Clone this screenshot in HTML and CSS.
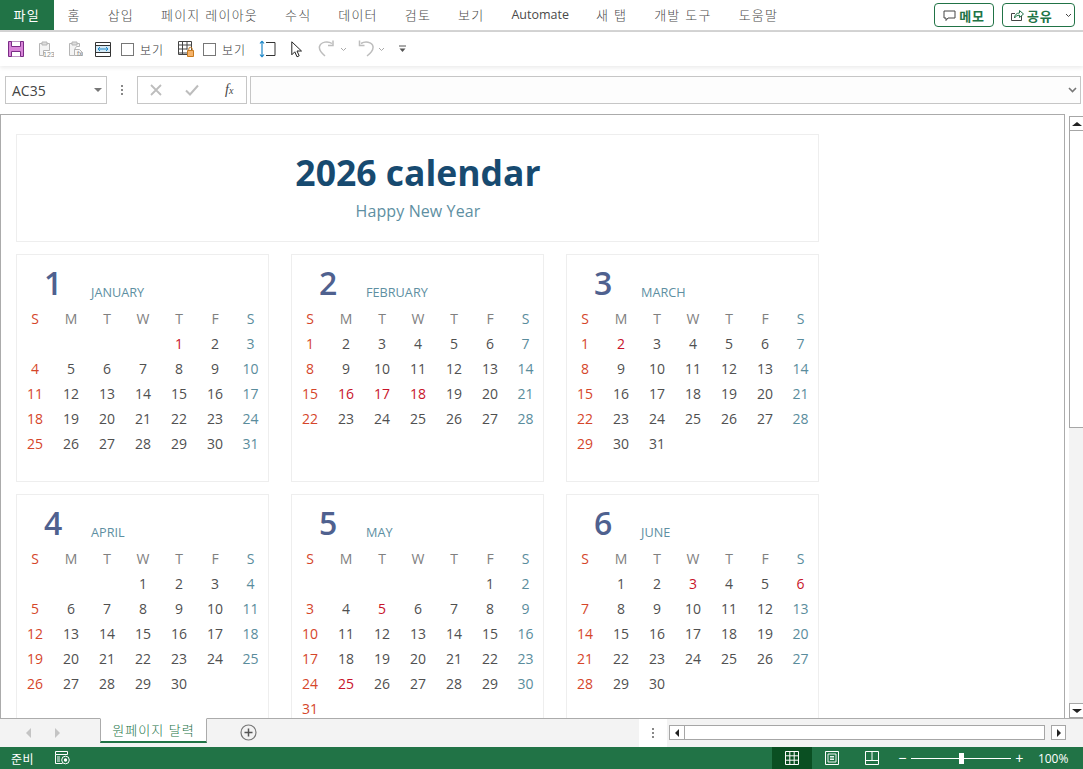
FILE: index.html
```html
<!DOCTYPE html>
<html lang="ko">
<head>
<meta charset="utf-8">
<title>2026 calendar</title>
<link rel="stylesheet" href="styles.css">
</head>
<body>
<div class="app">
  <header class="tabs">
    <nav class="tab-list">
      <span class="tab tab-file">파일</span>
      <span class="tab">홈</span>
      <span class="tab">삽입</span>
      <span class="tab">페이지 레이아웃</span>
      <span class="tab">수식</span>
      <span class="tab">데이터</span>
      <span class="tab">검토</span>
      <span class="tab">보기</span>
      <span class="tab tab-latin">Automate</span>
      <span class="tab">새 탭</span>
      <span class="tab">개발 도구</span>
      <span class="tab">도움말</span>
    </nav>
    <div class="tab-actions">
      <button class="pill pill-memo"><svg width="13" height="13" viewBox="0 0 13 13"><path d="M1 2h11v7H5L3 11.500V9H1z" fill="none" stroke="#444" stroke-width="1"/></svg><b>메모</b></button>
      <button class="pill pill-share"><svg width="14" height="14" viewBox="0 0 14 14"><path d="M5 5.500H1.500v7h10V8" fill="none" stroke="#444"/><path d="M4.500 10c0-3 2-5 5-5V2.500l4 3.500-4 3.500V7.200c-2 0-4 1-5 2.800z" fill="none" stroke="#217346"/></svg><b>공유</b><svg class="pill-caret" width="7" height="5" viewBox="0 0 7 5"><path d="M1 1l2.500 2.500L6 1" fill="none" stroke="#444"/></svg></button>
    </div>
  </header>

  <div class="qat">
    <svg class="i-save" width="16" height="16" viewBox="0 0 16 16"><path d="M.5.500h15v15H.5z" fill="#d884d8" stroke="#7a2c86"/><path d="M3.500.500v5h9v-5M3.500 15.500v-5h9v5" fill="#fff" stroke="#7a2c86"/></svg>
    <svg class="i-paste1" width="16" height="18" viewBox="0 0 16 18"><path d="M1.500 3.500h10v7h-6v5h-4z" fill="#f4f4f4" stroke="#b5b5b5"/><path d="M4 2h5v3H4z" fill="#ddd" stroke="#b5b5b5"/><text x="5" y="16.500" class="mini">123</text></svg>
    <svg class="i-paste2" width="16" height="18" viewBox="0 0 16 18"><path d="M1.500 3.500h10v3h-3l-2 3v6h-5z" fill="#f4f4f4" stroke="#b5b5b5"/><path d="M4 2h5v3H4z" fill="#ddd" stroke="#b5b5b5"/><path d="M6.500 9.500h5l3 3v3h-8z" fill="#f7f7f7" stroke="#b5b5b5"/><text x="9" y="16" class="mini">fx</text></svg>
    <svg class="i-fit" width="16" height="16" viewBox="0 0 16 16"><path d="M.5 1.500h15v14H.5z" fill="#fff" stroke="#333"/><path d="M1 5h14v6H1z" fill="#d5eaf6"/><path d="M1 4.500h14M1 11.500h14" stroke="#333"/><path d="M3 8h10M3 8l2-2M3 8l2 2M13 8l-2-2M13 8l-2 2" fill="none" stroke="#1e88c9"/></svg>
    <label class="chk chk-a"><span class="box"></span>보기</label>
    <svg class="i-lock" width="17" height="18" viewBox="0 0 17 18"><path d="M.5 1.500h13v13H.5z" fill="#fff" stroke="#444"/><path d="M.5 5h13M.5 9h9M.5 13h9M4.500 1.500v13M9 1.500v8" stroke="#444" fill="none"/><path d="M9.500 10.500h6v6h-6z" fill="#f6b36a" stroke="#c77a1e"/><path d="M10.800 10.500V9a1.700 1.700 0 0 1 3.400 0v1.500" fill="none" stroke="#c77a1e"/></svg>
    <label class="chk chk-b"><span class="box"></span>보기</label>
    <svg class="i-height" width="17" height="18" viewBox="0 0 17 18"><path d="M7 2.500h9v13H7" fill="#fff" stroke="#333"/><path d="M3 1v16M3 1L1 3.500M3 1l2 2.500M3 17l-2-2.500M3 17l2-2.500" fill="none" stroke="#1e88c9" stroke-width="1.200"/></svg>
    <svg class="i-cursor" width="12" height="17" viewBox="0 0 12 17"><path d="M.8.800v13l3-3 2.200 5 2.200-1-2.200-4.800h4.500z" fill="#fff" stroke="#222"/></svg>
    <svg class="i-redo" width="17" height="18" viewBox="0 0 17 18"><path d="M14 3.500C10 .8 3 1.500 1.500 6.500 0.700 10 3.500 13 7 16" fill="none" stroke="#bdbdbd" stroke-width="1.500"/><path d="M15 .5v5h-5" fill="none" stroke="#bdbdbd" stroke-width="1.500"/></svg>
    <svg class="i-chev1" width="7" height="5" viewBox="0 0 7 5"><path d="M1 1l2.500 2.500L6 1" fill="none" stroke="#aaa"/></svg>
    <svg class="i-undo" width="16" height="18" viewBox="0 0 16 18"><path d="M3 3.500C7 1 14 1.500 15 6.500c.5 3.500-2 6.500-6 9.500" fill="none" stroke="#bdbdbd" stroke-width="1.500"/><path d="M1.500.5v5h5" fill="none" stroke="#bdbdbd" stroke-width="1.500"/></svg>
    <svg class="i-chev2" width="7" height="5" viewBox="0 0 7 5"><path d="M1 1l2.500 2.500L6 1" fill="none" stroke="#aaa"/></svg>
    <svg class="i-more" width="7" height="8" viewBox="0 0 7 8"><path d="M0 1h7" stroke="#555"/><path d="M.5 3.500h6L3.500 7z" fill="#555"/></svg>
  </div>

  <div class="formula">
    <div class="namebox"><span>AC35</span><i class="tri"></i></div>
    <div class="fdots"><i></i><i></i><i></i></div>
    <div class="fx-group">
      <svg width="12" height="12" viewBox="0 0 12 12"><path d="M1 1l10 10M11 1L1 11" stroke="#bdbdbd" stroke-width="1.800"/></svg>
      <svg width="14" height="12" viewBox="0 0 14 12"><path d="M1 6.500L5 10.500 13 1.500" fill="none" stroke="#bdbdbd" stroke-width="2"/></svg>
      <span class="fx">f<small>x</small></span>
    </div>
    <div class="finput"><svg width="9" height="6" viewBox="0 0 9 6"><path d="M1 1l3.500 3.500L8 1" fill="none" stroke="#777" stroke-width="1.600"/></svg></div>
  </div>

  <main class="work">
    <div class="sheet">
      <section class="cal-title">
        <h1>2026 calendar</h1>
        <p>Happy New Year</p>
      </section>
      <div class="cal-grid">
        <article class="card">
          <div class="card-head"><span class="num">1</span><span class="mon">JANUARY</span></div>
          <div class="days dow"><span>S</span><span>M</span><span>T</span><span>W</span><span>T</span><span>F</span><span>S</span></div>
          <div class="days"><span></span><span></span><span></span><span></span><span class="h">1</span><span>2</span><span>3</span><span>4</span><span>5</span><span>6</span><span>7</span><span>8</span><span>9</span><span>10</span><span>11</span><span>12</span><span>13</span><span>14</span><span>15</span><span>16</span><span>17</span><span>18</span><span>19</span><span>20</span><span>21</span><span>22</span><span>23</span><span>24</span><span>25</span><span>26</span><span>27</span><span>28</span><span>29</span><span>30</span><span>31</span></div>
        </article>
        <article class="card">
          <div class="card-head"><span class="num">2</span><span class="mon">FEBRUARY</span></div>
          <div class="days dow"><span>S</span><span>M</span><span>T</span><span>W</span><span>T</span><span>F</span><span>S</span></div>
          <div class="days"><span>1</span><span>2</span><span>3</span><span>4</span><span>5</span><span>6</span><span>7</span><span>8</span><span>9</span><span>10</span><span>11</span><span>12</span><span>13</span><span>14</span><span>15</span><span class="h">16</span><span class="h">17</span><span class="h">18</span><span>19</span><span>20</span><span>21</span><span>22</span><span>23</span><span>24</span><span>25</span><span>26</span><span>27</span><span>28</span></div>
        </article>
        <article class="card">
          <div class="card-head"><span class="num">3</span><span class="mon">MARCH</span></div>
          <div class="days dow"><span>S</span><span>M</span><span>T</span><span>W</span><span>T</span><span>F</span><span>S</span></div>
          <div class="days"><span>1</span><span class="h">2</span><span>3</span><span>4</span><span>5</span><span>6</span><span>7</span><span>8</span><span>9</span><span>10</span><span>11</span><span>12</span><span>13</span><span>14</span><span>15</span><span>16</span><span>17</span><span>18</span><span>19</span><span>20</span><span>21</span><span>22</span><span>23</span><span>24</span><span>25</span><span>26</span><span>27</span><span>28</span><span>29</span><span>30</span><span>31</span></div>
        </article>
        <article class="card">
          <div class="card-head"><span class="num">4</span><span class="mon">APRIL</span></div>
          <div class="days dow"><span>S</span><span>M</span><span>T</span><span>W</span><span>T</span><span>F</span><span>S</span></div>
          <div class="days"><span></span><span></span><span></span><span>1</span><span>2</span><span>3</span><span>4</span><span>5</span><span>6</span><span>7</span><span>8</span><span>9</span><span>10</span><span>11</span><span>12</span><span>13</span><span>14</span><span>15</span><span>16</span><span>17</span><span>18</span><span>19</span><span>20</span><span>21</span><span>22</span><span>23</span><span>24</span><span>25</span><span>26</span><span>27</span><span>28</span><span>29</span><span>30</span></div>
        </article>
        <article class="card">
          <div class="card-head"><span class="num">5</span><span class="mon">MAY</span></div>
          <div class="days dow"><span>S</span><span>M</span><span>T</span><span>W</span><span>T</span><span>F</span><span>S</span></div>
          <div class="days"><span></span><span></span><span></span><span></span><span></span><span>1</span><span>2</span><span>3</span><span>4</span><span class="h">5</span><span>6</span><span>7</span><span>8</span><span>9</span><span>10</span><span>11</span><span>12</span><span>13</span><span>14</span><span>15</span><span>16</span><span>17</span><span>18</span><span>19</span><span>20</span><span>21</span><span>22</span><span>23</span><span>24</span><span class="h">25</span><span>26</span><span>27</span><span>28</span><span>29</span><span>30</span><span>31</span></div>
        </article>
        <article class="card">
          <div class="card-head"><span class="num">6</span><span class="mon">JUNE</span></div>
          <div class="days dow"><span>S</span><span>M</span><span>T</span><span>W</span><span>T</span><span>F</span><span>S</span></div>
          <div class="days"><span></span><span>1</span><span>2</span><span class="h">3</span><span>4</span><span>5</span><span class="h">6</span><span>7</span><span>8</span><span>9</span><span>10</span><span>11</span><span>12</span><span>13</span><span>14</span><span>15</span><span>16</span><span>17</span><span>18</span><span>19</span><span>20</span><span>21</span><span>22</span><span>23</span><span>24</span><span>25</span><span>26</span><span>27</span><span>28</span><span>29</span><span>30</span></div>
        </article>
      </div>
    </div>
    <aside class="vscroll">
      <div class="sb-btn"><i class="arr-up"></i></div>
      <div class="sb-thumb"></div>
      <div class="sb-btn sb-down"><i class="arr-down"></i></div>
    </aside>
  </main>

  <div class="sheetbar">
    <div class="nav-arrows"><i class="arr-l"></i><i class="arr-r"></i></div>
    <div class="sheet-tab">원페이지 달력</div>
    <svg class="add" width="17" height="17" viewBox="0 0 17 17"><circle cx="8.500" cy="8.500" r="7.500" fill="none" stroke="#777" stroke-width="1.200"/><path d="M8.500 4.500v8M4.500 8.500h8" stroke="#555" stroke-width="1.500"/></svg>
    <div class="split"><i></i><i></i><i></i></div>
    <div class="hscroll">
      <div class="hb"><i class="arr-l dark"></i></div>
      <div class="hthumb"></div>
      <div class="hb hb-right"><i class="arr-r dark"></i></div>
    </div>
  </div>

  <footer class="status">
    <span class="ready">준비</span>
    <svg class="rec" width="15" height="14" viewBox="0 0 15 14"><path d="M.5.500h12v3H.5zM.5 3.500v9h7" fill="none" stroke="#fff"/><path d="M2 6h3M2 8h3M2 10h3" stroke="#fff"/><circle cx="10.500" cy="9" r="3.800" fill="none" stroke="#fff"/><circle cx="10.500" cy="9" r="1.700" fill="#fff"/></svg>
    <div class="views">
      <div class="view view-on"><svg width="14" height="14" viewBox="0 0 14 14"><path d="M.5.500h13v13H.5zM.5 4.800h13M.5 9.200h13M4.800.5v13M9.200.5v13" fill="none" stroke="#fff"/></svg></div>
      <div class="view"><svg width="14" height="14" viewBox="0 0 14 14"><path d="M.5.500h13v13H.5z" fill="none" stroke="#fff"/><path d="M3 3h8v8H3zM5 5.500h4M5 7h4M5 8.500h4" fill="none" stroke="#fff" stroke-width=".9"/></svg></div>
      <div class="view"><svg width="14" height="14" viewBox="0 0 14 14"><path d="M.5.500h13v13H.5zM.5 9.500h13M7 .5v9" fill="none" stroke="#fff"/></svg></div>
    </div>
    <div class="zoom">
      <span class="z-sign">−</span>
      <div class="z-track"><i class="z-knob"></i></div>
      <span class="z-sign">+</span>
      <span class="z-pct">100%</span>
    </div>
  </footer>
</div>
</body>
</html>
```

FILE: styles.css
```css
* { box-sizing: border-box; }
html, body { margin: 0; padding: 0; height: 100%; overflow: hidden; }
body { font-family: "Open Sans", "Noto Sans CJK KR", sans-serif; color: #444; background: #fff; }
.app { width: 1083px; height: 769px; display: flex; flex-direction: column; overflow: hidden; }

/* ribbon tabs */
.tabs { height: 32px; flex: none; display: flex; justify-content: space-between; border-bottom: 2px solid #d4d4d4; }
.tab-list { display: flex; }
.tab { padding: 0 13.500px; height: 30px; line-height: 30px; font-size: 13px; letter-spacing: 1.200px; color: #4a4a4a; white-space: nowrap; font-family: "Noto Sans CJK KR", sans-serif; font-weight: 300; }
.tab-file { background: #217346; color: #fff; width: 54px; font-weight: 400; }
.tab-latin { font-family: "Open Sans", sans-serif; font-size: 12.500px; letter-spacing: 0; font-weight: 400; }
.tab-actions { display: flex; gap: 8px; padding: 3px 8px 0 0; }
.pill { height: 24px; border: 1px solid #217346; border-radius: 4px; background: #fff; display: flex; align-items: center; gap: 3px; padding: 0; font-family: "Noto Sans CJK KR", sans-serif; font-size: 13px; color: #217346; }
.pill b { font-weight: 700; letter-spacing: .8px; }
.pill-memo { width: 60px; justify-content: center; }
.pill-share { width: 73px; padding-left: 7px; }
.pill-caret { margin-left: 9px; }

/* quick access */
.qat { height: 34px; flex: none; display: flex; align-items: center; position: relative; background: #fff; box-shadow: 0 2px 4px rgba(0,0,0,.08); padding-left: 8px; }
.qat .mini { font-size: 7px; fill: #8a8a8a; font-family: "Liberation Sans", sans-serif; }
.i-paste1 { margin-left: 14px; }
.i-paste2 { margin-left: 14px; }
.i-fit { margin-left: 11px; }
.chk { display: flex; align-items: center; font-size: 12px; font-family: "Noto Sans CJK KR", sans-serif; font-weight: 300; color: #333; letter-spacing: .9px; width: 41px; white-space: nowrap; }
.box { width: 13px; height: 13px; border: 1px solid #777; background: #fff; margin-right: 6px; flex: none; }
.chk-a { margin-left: 10px; }
.i-lock { margin-left: 16px; }
.chk-b { margin-left: 8px; }
.i-height { margin-left: 15px; }
.i-cursor { margin-left: 15px; }
.i-redo { margin-left: 15px; }
.i-chev1 { margin-left: 5px; }
.i-undo { margin-left: 11px; }
.i-chev2 { margin-left: 4px; }
.i-more { margin-left: 14px; }

/* formula bar */
.formula { height: 48px; flex: none; display: flex; align-items: flex-start; padding: 10px 2px 0 5px; background: #fff; }
.namebox { width: 102px; height: 28px; border: 1px solid #c6c6c6; display: flex; align-items: center; justify-content: space-between; padding: 0 4px 0 6px; font-size: 14px; color: #444; background: #fff; }
.tri { width: 0; height: 0; border: 4px solid transparent; border-top: 4px solid #777; border-bottom: 0; }
.fdots { width: 30px; height: 28px; display: flex; flex-direction: column; align-items: center; justify-content: center; gap: 2px; }
.fdots i, .split i { width: 2px; height: 2px; background: #888; display: block; }
.fx-group { width: 110px; height: 28px; border: 1px solid #c6c6c6; display: flex; align-items: center; padding-left: 12px; gap: 23px; }
.fx { font-family: "Liberation Serif", serif; font-style: italic; font-weight: 400; font-size: 14px; color: #444; margin-left: 3px; }
.fx small { font-size: 10px; }
.finput { margin-left: 3px; flex: 1; height: 28px; border: 1px solid #c6c6c6; display: flex; align-items: center; justify-content: flex-end; padding-right: 3px; background: #fdfdfd; }

/* work area */
.work { flex: 1; min-height: 0; display: flex; padding-top: 0; background: #fff; }
.sheet { width: 1065px; height: 100%; border: 1px solid #ababab; border-width: 1px 1px 0 1px; overflow: hidden; padding: 19px 0 0 15px; background: #fff; }
.cal-title { width: 803px; height: 108px; border: 1px solid #eeeeee; text-align: center; padding: 12px 0 0 1px; }
.cal-title h1 { margin: 0; font-size: 35.500px; line-height: 50px; font-weight: 700; color: #174a70; }
.cal-title p { margin: 2px 0 0; font-size: 16px; line-height: 24px; color: #5e8fa2; letter-spacing: .1px; font-weight: 400; }
.cal-grid { display: grid; grid-template-columns: repeat(3, 253px); grid-auto-rows: 228px; column-gap: 22px; row-gap: 12px; margin-top: 12px; }
.card { border: 1px solid #eeeeee; }
.card-head { height: 51px; display: flex; align-items: flex-start; padding: 6px 0 0 27px; }
.num { width: 47px; font-size: 32px; line-height: 44px; font-weight: 600; color: #4f618f; }
.mon { margin-top: 22px; font-size: 12.700px; line-height: 18px; color: #5e8fa2; font-weight: 400; }
.days { display: grid; grid-template-columns: repeat(6, 36px) 35px; grid-auto-rows: 25px; text-align: center; font-size: 14px; line-height: 25px; color: #505050; font-weight: 400; }
.days span:nth-child(7n+1) { color: #d5462a; }
.days span:nth-child(7n) { color: #5a8c9c; }
.days span.h { color: #c8142a; }
.dow { color: #808080; }

/* vertical scrollbar */
.vscroll { width: 14px; margin: 2px 0 0 4px; display: flex; flex-direction: column; background: #f3f3f3; }
.sb-btn { height: 15px; flex: none; background: #fff; border: 1px solid #a6a6a6; border-right: 0; display: flex; align-items: center; justify-content: center; }
.sb-thumb { height: 297px; background: #fff; border: 1px solid #a6a6a6; border-right: 0; border-top: 0; }
.sb-down { margin-top: auto; }
.arr-up { width: 0; height: 0; border: 5px solid transparent; border-bottom: 4px solid #222; border-top: 0; }
.arr-down { width: 0; height: 0; border: 5px solid transparent; border-top: 4px solid #222; border-bottom: 0; }

/* sheet tabs */
.sheetbar { height: 29px; flex: none; display: flex; align-items: flex-start; background: #f3f3f3; border-top: 1px solid #ababab; position: relative; }
.nav-arrows { width: 100px; height: 27px; display: flex; align-items: center; padding-left: 26px; gap: 24px; }
.arr-l { width: 0; height: 0; border: 5px solid transparent; border-left: 0; border-right: 5px solid #c4c4c4; }
.arr-r { width: 0; height: 0; border: 5px solid transparent; border-right: 0; border-left: 5px solid #c4c4c4; }
.sheet-tab { width: 107px; height: 25px; margin-top: -1px; background: #fff; border: 1px solid #ababab; border-top: 1px solid #fff; border-bottom: 2px solid #217346; text-align: center; line-height: 22px; font-size: 13px; letter-spacing: 1px; color: #217346; font-family: "Noto Sans CJK KR", sans-serif; font-weight: 300; }
.add { margin: 5px 0 0 33px; }
.split { width: 28px; height: 28px; margin-left: 382px; background: #fff; display: flex; flex-direction: column; align-items: center; justify-content: center; gap: 2px; }
.hscroll { margin: 6px 0 0 2px; width: 397px; height: 15px; display: flex; }
.hb { width: 15px; height: 15px; border: 1px solid #a6a6a6; border-right: 0; background: #fff; display: flex; align-items: center; justify-content: center; }
.hb-right { border-right: 1px solid #a6a6a6; margin-left: 6px; }
.hthumb { width: 361px; height: 15px; background: #fff; border: 1px solid #a6a6a6; }
.arr-l.dark { border-right-color: #222; border-width: 4px; border-left: 0; }
.arr-r.dark { border-left-color: #222; border-width: 4px; border-right: 0; }

/* status bar */
.status { height: 22px; flex: none; background: #217346; display: flex; align-items: center; color: #fff; }
.ready { margin-left: 11px; font-size: 12px; font-family: "Noto Sans CJK KR", sans-serif; letter-spacing: .4px; }
.rec { margin-left: 21px; }
.views { display: flex; margin-left: 702px; height: 22px; }
.view { width: 40px; display: flex; align-items: center; justify-content: center; }
.view-on { background: #0a4f22; }
.zoom { display: flex; align-items: center; margin-left: 6px; color: #fff; }
.z-sign { width: 9px; font-size: 14px; line-height: 16px; text-align: center; font-family: "Liberation Sans", sans-serif; }
.z-track { width: 100px; height: 1px; background: #fff; margin: 0 4px; position: relative; }
.z-knob { position: absolute; left: 48px; top: -5px; width: 5px; height: 11px; background: #fff; }
.z-pct { margin-left: 14px; font-size: 12px; }
```
